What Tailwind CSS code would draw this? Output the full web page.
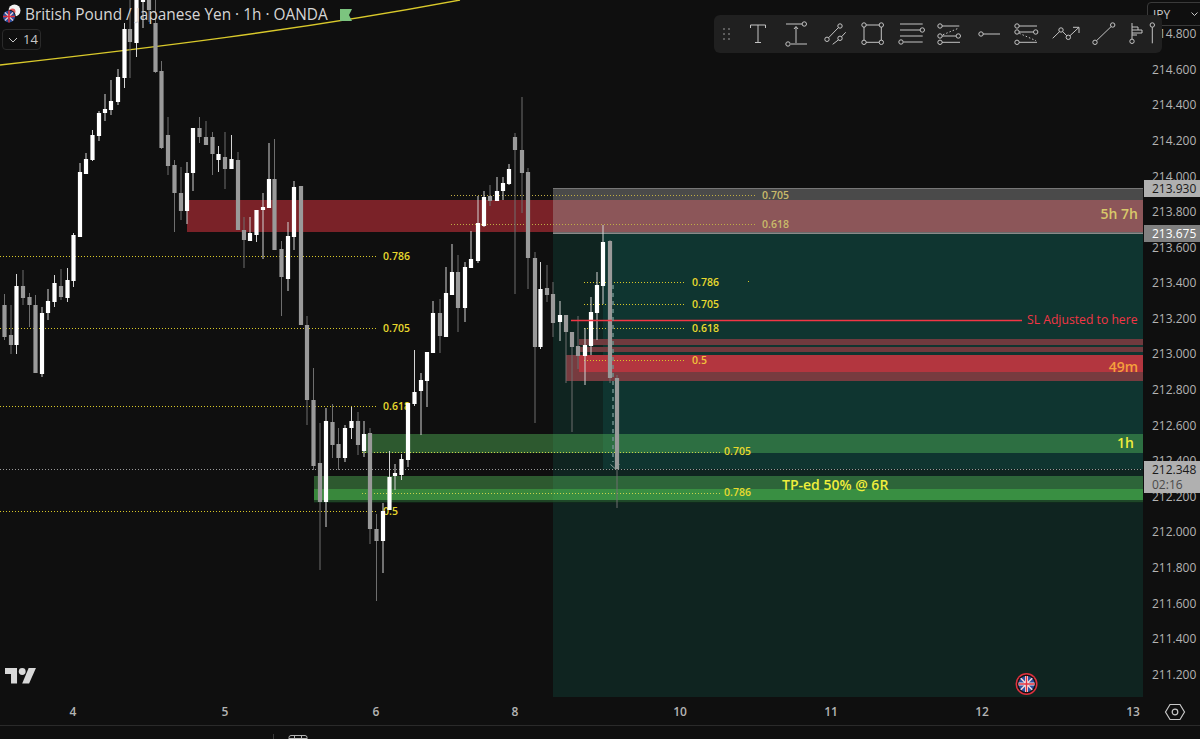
<!DOCTYPE html>
<html lang="en">
<head>
    <meta charset="UTF-8">
    <title>GBPJPY chart</title>
    <script src="https://cdn.jsdelivr.net/npm/@tailwindcss/browser@4"></script>
</head>
<body class="relative w-[1200px] h-[739px] overflow-hidden bg-[#0f0f0f] font-['Open_Sans',sans-serif]">

<div class="flex h-[697px]">
    <!-- chart pane -->
    <div class="relative w-[1143px] overflow-hidden">
        <svg id="chart" class="block" width="1143" height="697" viewBox="0 0 1143 697">
            <!-- order book blocks -->
            <rect x="187" y="200" width="956" height="32" fill="#7a2228"/>

            <!-- long position tool -->
            <rect x="553" y="233" width="590" height="464" fill="#0f2420"/>
            <rect x="603" y="233" width="540" height="236" fill="#0f3530"/>
            <rect x="553" y="188" width="590" height="45" fill="#aaaaaa" fill-opacity="0.38"/>
            <rect x="553" y="188" width="590" height="1" fill="#777777"/>
            <rect x="553" y="232.500" width="590" height="1.500" fill="#8a8a8a"/>

            <rect x="579" y="339" width="564" height="6" fill="#6f3a3e"/>
            <rect x="579" y="347" width="564" height="5" fill="#6f3a3e"/>
            <rect x="566" y="355" width="577" height="26" fill="#773b3f"/>
            <rect x="579" y="355" width="564" height="17" fill="#b3363f"/>

            <rect x="362" y="434" width="781" height="19" fill="#59c15d" fill-opacity="0.42"/>
            <rect x="314" y="476" width="829" height="26" fill="#59c15d" fill-opacity="0.42"/>
            <rect x="314" y="489" width="829" height="11" fill="#4ad050" fill-opacity="0.4"/>
            <rect x="314" y="500" width="829" height="3" fill="#12301c" fill-opacity="0.55"/>

            <!-- moving average -->
            <path d="M0 65 C150 48 300 30 460 0" fill="none" stroke="#d9c92b" stroke-width="1.300"/>

            <!-- fib levels -->
            <g stroke-width="1" stroke-dasharray="1 2">
                <path d="M0 256.500H376M0 328.500H376M0 406.500H376M0 511.500H376" stroke="#d8c828"/>
                <path d="M451 195.500H755M451 224.500H755" stroke="#bfae45"/>
                <path d="M584 282.500H685M584 304.500H685M584 328.500H685M584 360.500H685" stroke="#d8c828"/>
                <path d="M362 452.500H722M362 493.500H722" stroke="#c8d24a"/>
                <path d="M0 469.500H1143" stroke="#9a9a9a"/>
            </g>
            <g font-size="10.500" font-weight="600" fill="#e8d92e">
                <text x="383" y="260">0.786</text>
                <text x="383" y="332">0.705</text>
                <text x="383" y="410">0.618</text>
                <text x="383" y="515">0.5</text>
                <text x="762" y="199" fill="#c9bb6a">0.705</text>
                <text x="762" y="228" fill="#c9bb6a">0.618</text>
                <text x="692" y="286">0.786</text>
                <text x="692" y="308">0.705</text>
                <text x="692" y="332">0.618</text>
                <text x="692" y="364" fill="#f2c23a">0.5</text>
                <text x="724" y="455">0.705</text>
                <text x="724" y="496">0.786</text>
            </g>
            <rect x="748" y="281" width="1" height="1" fill="#d8c828"/>

            <g id="candles"></g>

            <!-- stop line and notes -->
            <path d="M571 320.500H1022" stroke="#f23645" stroke-width="1.500"/>
            <path d="M613 285V462" stroke="#6d8f8a" stroke-width="1.500" stroke-dasharray="4 4"/>
            <path d="M610.500 464.500L615 468.500L619.500 464.500" fill="none" stroke="#8a9a96" stroke-width="1"/>

            <text x="1027" y="324" font-size="12.200" fill="#f23645">SL Adjusted to here</text>
            <g font-size="14" font-weight="600" text-anchor="end">
                <text x="1138" y="219" fill="#d8c86a">5h 7h</text>
                <text x="1138" y="372" fill="#f5a03c">49m</text>
                <text x="1134" y="448" fill="#eded3c">1h</text>
            </g>
            <text x="782" y="489.500" font-size="14" font-weight="600" fill="#efef3c">TP-ed 50% @ 6R</text>

            <!-- event marker -->
            <g transform="translate(1026.500 684)">
                <circle r="11" fill="#e0313f"/>
                <circle r="9.500" fill="#131313"/>
                <circle r="8" fill="#2b4f9e"/>
                <path d="M-5.700 -5.700L5.700 5.700M5.700 -5.700L-5.700 5.700" stroke="#f2d8d8" stroke-width="1.600"/>
                <path d="M-8 0H8M0 -8V8" stroke="#f4f0f0" stroke-width="3"/>
                <path d="M-8 0H8M0 -8V8" stroke="#e0313f" stroke-width="1.500"/>
            </g>

            <!-- tradingview mark -->
            <g transform="translate(5 662) scale(0.86)" fill="#d8d8d8">
                <path d="M14 25H7V14H0V7H14V25Z"/>
                <path d="M28 25H20L27.500 7H36L28 25Z"/>
                <circle cx="20" cy="11" r="4"/>
            </g>
        </svg>

        <!-- legend -->
        <svg class="absolute left-0 top-0" width="24" height="26" viewBox="0 0 24 26">
            <circle cx="14.500" cy="10.500" r="6" fill="#f4f4f4"/>
            <circle cx="12.500" cy="11.500" r="3" fill="#e05a5f"/>
            <circle cx="9" cy="16.500" r="6.800" fill="#0f0f0f"/>
            <circle cx="9" cy="16.500" r="6" fill="#2b4f9e"/>
            <path d="M5 12.500L13 20.500M13 12.500L5 20.500" stroke="#f0d0d0" stroke-width="1.200"/>
            <path d="M3 16.500H15M9 10.500V22.500" stroke="#e0313f" stroke-width="1.600"/>
        </svg>
        <div class="absolute left-[25px] top-0 flex items-center h-[30px]">
            <span class="text-[15.400px] leading-[30px] text-[#d6d6d6] whitespace-nowrap">British Pound / Japanese Yen · 1h · OANDA</span>
            <svg class="ml-[12px]" width="12" height="12" viewBox="0 0 12 12">
                <path d="M0 0H12L9 6L12 12H0Z" fill="#7cc47f"/>
            </svg>
        </div>
        <div class="absolute left-[2px] top-[29px] flex items-center gap-[5px] w-[39px] h-[21px] pl-[5px] rounded-[4px] border border-[#2a2a2a] bg-[#0f0f0f]">
            <svg width="10" height="6" viewBox="0 0 10 6"><path d="M1 1L5 5L9 1" fill="none" stroke="#c8c8c8" stroke-width="1"/></svg>
            <span class="text-[13px] leading-none text-[#c8c8c8]">14</span>
        </div>
    </div>

    <!-- price scale -->
    <div class="relative w-[57px] pt-[16.500px] text-[12px] text-[#b4b4b4]">
        <div class="h-[35.590px] pl-[9px] flex items-center">214.800</div>
        <div class="h-[35.590px] pl-[9px] flex items-center">214.600</div>
        <div class="h-[35.590px] pl-[9px] flex items-center">214.400</div>
        <div class="h-[35.590px] pl-[9px] flex items-center">214.200</div>
        <div class="h-[35.590px] pl-[9px] flex items-center">214.000</div>
        <div class="h-[35.590px] pl-[9px] flex items-center">213.800</div>
        <div class="h-[35.590px] pl-[9px] flex items-center">213.600</div>
        <div class="h-[35.590px] pl-[9px] flex items-center">213.400</div>
        <div class="h-[35.590px] pl-[9px] flex items-center">213.200</div>
        <div class="h-[35.590px] pl-[9px] flex items-center">213.000</div>
        <div class="h-[35.590px] pl-[9px] flex items-center">212.800</div>
        <div class="h-[35.590px] pl-[9px] flex items-center">212.600</div>
        <div class="h-[35.590px] pl-[9px] flex items-center">212.400</div>
        <div class="h-[35.590px] pl-[9px] flex items-center">212.200</div>
        <div class="h-[35.590px] pl-[9px] flex items-center">212.000</div>
        <div class="h-[35.590px] pl-[9px] flex items-center">211.800</div>
        <div class="h-[35.590px] pl-[9px] flex items-center">211.600</div>
        <div class="h-[35.590px] pl-[9px] flex items-center">211.400</div>
        <div class="h-[35.590px] pl-[9px] flex items-center">211.200</div>

        <!-- JPY currency button -->
        <div class="absolute left-[4px] top-[2px] w-[60px] h-[24px] rounded-[4px] border border-[#3a3a3a] bg-[#0f0f0f] pl-[5px] pt-[5px] text-[12px] leading-[14px] text-[#c8c8c8]">JPY</div>
        <svg class="absolute left-[48px] top-[12px]" width="7" height="5" viewBox="0 0 7 5"><path d="M0.500 0.500L3.500 3.500L6.500 0.500" fill="none" stroke="#c8c8c8"/></svg>

        <!-- price badges -->
        <div class="absolute left-[1px] top-[180px] w-[56px] h-[17px] pl-[8px] bg-[#b0b0b0] text-[#1a1a1a] leading-[17px]">213.930</div>
        <div class="absolute left-[1px] top-[225px] w-[56px] h-[17px] pl-[8px] bg-[#808080] text-white leading-[17px]">213.675</div>
        <div class="absolute left-[1px] top-[461px] w-[56px] h-[32px] pl-[8px] pt-[1px] bg-[#b0b0b0] text-[#1a1a1a] leading-[15px]">
            <div>212.348</div>
            <div class="text-[#4a4a4a]">02:16</div>
        </div>
    </div>
</div>

<!-- time scale -->
<div class="relative flex items-center h-[28px] pt-[2px] text-[12px] font-semibold text-[#b4b4b4]">
    <span class="w-[20px] text-center ml-[63px]">4</span>
    <span class="w-[20px] text-center ml-[132px]">5</span>
    <span class="w-[20px] text-center ml-[131px]">6</span>
    <span class="w-[20px] text-center ml-[119px]">8</span>
    <span class="w-[20px] text-center ml-[145px]">10</span>
    <span class="w-[20px] text-center ml-[131px]">11</span>
    <span class="w-[20px] text-center ml-[131px]">12</span>
    <span class="w-[20px] text-center ml-[131px]">13</span>
    <svg class="absolute left-[1164px] top-[4px]" width="22" height="22" viewBox="0 0 22 22" fill="none" stroke="#c8c8c8" stroke-width="1.200">
        <path d="M1.500 11L6 3.500H16L20.500 11L16 18.500H6Z"/>
        <circle cx="11" cy="11" r="2.800"/>
    </svg>
</div>

<!-- bottom toolbar, mostly cut off -->
<div class="flex items-start h-[14px] border-t border-[#2a2a2a]">
    <div class="ml-[273px] mt-[8px] w-px h-[6px] bg-[#3a3a3a]"></div>
    <svg class="ml-[14px] mt-[9px]" width="20" height="5" viewBox="0 0 20 5" fill="none" stroke="#b4b4b4">
        <path d="M1 5V2.500Q1 0.500 3 0.500H17Q19 0.500 19 2.500V5M1 3.500H19M6.500 0V5M13.500 0V5"/>
    </svg>
</div>

<!-- drawing toolbar -->
<div class="absolute left-[714px] top-[15px] w-[448px] h-[38px] rounded-[6px] bg-[#202020]">
    <svg class="absolute left-0 top-0" width="448" height="38" viewBox="714 15 448 38" fill="none" stroke="#c4c4c4" stroke-width="1">
        <g fill="#5c5c5c" stroke="none">
            <rect x="723" y="28" width="2" height="2"/><rect x="728" y="28" width="2" height="2"/>
            <rect x="723" y="33" width="2" height="2"/><rect x="728" y="33" width="2" height="2"/>
            <rect x="723" y="38" width="2" height="2"/><rect x="728" y="38" width="2" height="2"/>
        </g>
        <!-- text -->
        <path d="M750.500 28V25H765.500V28M758 25V42.500M755 42.500H761"/>
        <!-- anchored text -->
        <path d="M786 24H802M796 27V43M794 29L796 26.500L798 29M791 44H807"/>
        <circle cx="804.300" cy="24" r="2.200"/><circle cx="788" cy="44" r="2.200"/>
        <!-- parallel lines -->
        <path d="M838.500 27.500L828.500 37.800M845.700 32.300L841.500 36.800M838.500 39.800L832.700 44.300"/>
        <circle cx="840" cy="26" r="2.200"/><circle cx="827" cy="39.300" r="2.200"/><circle cx="840" cy="38.300" r="2.200"/>
        <!-- rectangle -->
        <path d="M866 25H879.300M866 42.300H879.300M864 27V40.300M881.300 27V40.300"/>
        <circle cx="864" cy="25" r="2.200"/><circle cx="881.300" cy="25" r="2.200"/><circle cx="864" cy="42.300" r="2.200"/><circle cx="881.300" cy="42.300" r="2.200"/>
        <!-- fib retracement -->
        <path d="M900 24H922.700M900 30H920M900 36H922.700M903.500 42H922.700"/>
        <circle cx="922.300" cy="30" r="2.200"/><circle cx="901" cy="42" r="2.200"/>
        <!-- fib extension -->
        <path d="M942 26H959.300M942 36H956M942 42.300H960"/>
        <path d="M943 34.700L959 28" stroke-dasharray="1.500 2"/>
        <circle cx="940" cy="26" r="2.200"/><circle cx="940" cy="36" r="2.200"/><circle cx="958.300" cy="36" r="2.200"/><circle cx="940" cy="42.300" r="2.200"/>
        <!-- ray -->
        <path d="M983 34H1000"/>
        <circle cx="981" cy="34" r="2.200"/>
        <!-- gann levels -->
        <path d="M1019 26H1037M1019 32H1033.500M1019 42.300H1037"/>
        <path d="M1019.300 33.300L1036 40.700" stroke-dasharray="1.500 2"/>
        <circle cx="1017" cy="26" r="2.200"/><circle cx="1017" cy="32" r="2.200"/><circle cx="1035.700" cy="32" r="2.200"/><circle cx="1017" cy="42.300" r="2.200"/>
        <!-- path arrow -->
        <path d="M1052.700 38.300L1059.700 31.500M1062.600 31.500L1066.800 35.800M1070 35.700L1079 27.300M1073 27.300H1079V33"/>
        <circle cx="1061" cy="30" r="2.200"/><circle cx="1068.300" cy="37.300" r="2.200"/>
        <!-- trend line -->
        <path d="M1096.500 40.700L1111.200 26.500"/>
        <circle cx="1095" cy="42.300" r="2.200"/><circle cx="1112.700" cy="25" r="2.200"/>
        <!-- bars pattern -->
        <path d="M1132 23V39M1132 27H1138V30M1132 30H1142V33H1132M1132 35H1137"/>
        <circle cx="1132" cy="41.300" r="2.200"/>
        <!-- vertical -->
        <path d="M1152.300 27.200V43.300"/>
        <circle cx="1152.300" cy="25" r="2.200"/>
    </svg>
</div>

<script type="text/javascript">
    // x, wick top, body top, body bottom, wick bottom, colour
    const candles = [
        [4.5,294,305,337,340,'g'],[11,305,335,345,354,'g'],[16.5,274,286,345,354,'w'],[23,270,286,298,305,'g'],
        [29.5,293,297,305,327,'g'],[35.5,295,305,373,373,'g'],[42,307,313,374,377,'w'],[48,289,301,313,320,'w'],
        [54.5,275,283,302,307,'w'],[61,269,286,297,300,'g'],[67.5,268,280,298,302,'w'],[73.5,233,235,281,287,'w'],
        [80,163,172,237,237,'w'],[86,153,159,174,174,'w'],[92.5,130,135,160,161,'w'],[99,111,113,136,141,'w'],
        [105,94,109,113,121,'w'],[111,80,101,110,115,'w'],[118,69,77,102,105,'w'],[124.5,23,29,78,88,'w'],
        [130,0,29,42,78,'g'],[136.5,0,0,43,57,'w'],[143,0,0,2,28,'w'],[149,0,0,10,22,'g'],
        [155.5,0,23,72,73,'g'],[161.5,61,71,148,149,'g'],[168,117,135,166,175,'g'],[174.5,160,165,193,232,'g'],
        [181,167,193,211,220,'g'],[187,162,173,211,224,'w'],[193,128,128,173,191,'w'],[199.5,117,128,137,143,'g'],
        [206,121,137,145,145,'g'],[212.5,132,137,154,175,'g'],[218.5,146,154,160,172,'w'],[225,132,157,169,189,'g'],
        [231.5,135,159,169,169,'w'],[238,152,160,230,230,'g'],[244,217,230,240,268,'g'],[250,217,233,241,241,'w'],
        [256.5,210,210,235,242,'w'],[263,193,207,210,259,'w'],[269,143,179,208,208,'w'],[274.5,139,179,250,250,'g'],
        [281.5,241,249,277,316,'g'],[288,222,236,279,291,'w'],[294,181,187,237,250,'w'],[301,186,186,325,325,'g'],
        [307,316,325,400,425,'g'],[313.5,368,400,466,470,'g'],[320,423,463,502,570,'g'],[326,408,421,502,527,'w'],
        [332.5,404,422,445,458,'g'],[338.5,428,444,458,470,'g'],[345,425,428,458,462,'w'],[351.5,407,421,428,439,'w'],
        [358,412,421,445,455,'g'],[364,421,434,451,457,'w'],[370,428,433,529,544,'g'],[376.5,514,529,541,601,'g'],
        [383,503,511,541,573,'w'],[389.5,451,477,510,510,'w'],[395,464,473,476,490,'w'],[401.5,454,459,475,480,'w'],
        [408,403,403,460,467,'w'],[414.5,350,392,404,406,'w'],[421,373,380,391,435,'w'],[427,352,352,381,407,'w'],
        [433,301,313,353,353,'w'],[440,299,313,336,353,'g'],[446,267,293,337,337,'w'],[452,244,272,295,295,'w'],
        [458,255,272,308,332,'g'],[465,262,267,308,322,'w'],[471,231,259,268,268,'w'],[478,196,223,261,263,'w'],
        [484,191,197,226,227,'w'],[490,185,196,201,206,'g'],[497,177,191,201,201,'w'],[503,177,183,191,200,'w'],
        [509,164,169,184,185,'w'],[515,133,137,150,294,'g'],[522,97,150,173,213,'g'],[528,168,172,258,289,'g'],
        [535,252,258,347,423,'g'],[540.5,262,289,347,349,'w'],[547,265,288,295,302,'g'],[553,282,294,323,337,'g'],
        [560,301,315,322,341,'w'],[566,315,315,332,383,'g'],[572,332,332,347,432,'g'],[578,316,346,356,369,'g'],
        [585,328,345,356,385,'w'],[591,297,312,346,355,'w'],[597,272,285,313,340,'w'],[603,225,242,286,304,'w'],
        [610,240,241,378,383,'g'],[617,375,378,469,508,'g']
    ];

    function renderCandles(){
        const ns = 'http://www.w3.org/2000/svg';
        const candlesEl = document.querySelector('#candles');
        candles.forEach(function (c) {
            const up = c[5] === 'w';

            const wick = document.createElementNS(ns, 'rect');
            wick.setAttribute('x', c[0] - 0.5);
            wick.setAttribute('y', c[1]);
            wick.setAttribute('width', 1);
            wick.setAttribute('height', c[4] - c[1]);
            wick.setAttribute('fill', up ? '#d4d4d4' : '#6e6e6e');
            candlesEl.appendChild(wick);

            const body = document.createElementNS(ns, 'rect');
            body.setAttribute('x', c[0] - 2.1);
            body.setAttribute('y', c[2]);
            body.setAttribute('width', 4.2);
            body.setAttribute('height', Math.max(c[3] - c[2], 1));
            body.setAttribute('fill', up ? '#ffffff' : '#9a9a9a');
            candlesEl.appendChild(body);
        });
    }

    renderCandles();
</script>
</body>
</html>
